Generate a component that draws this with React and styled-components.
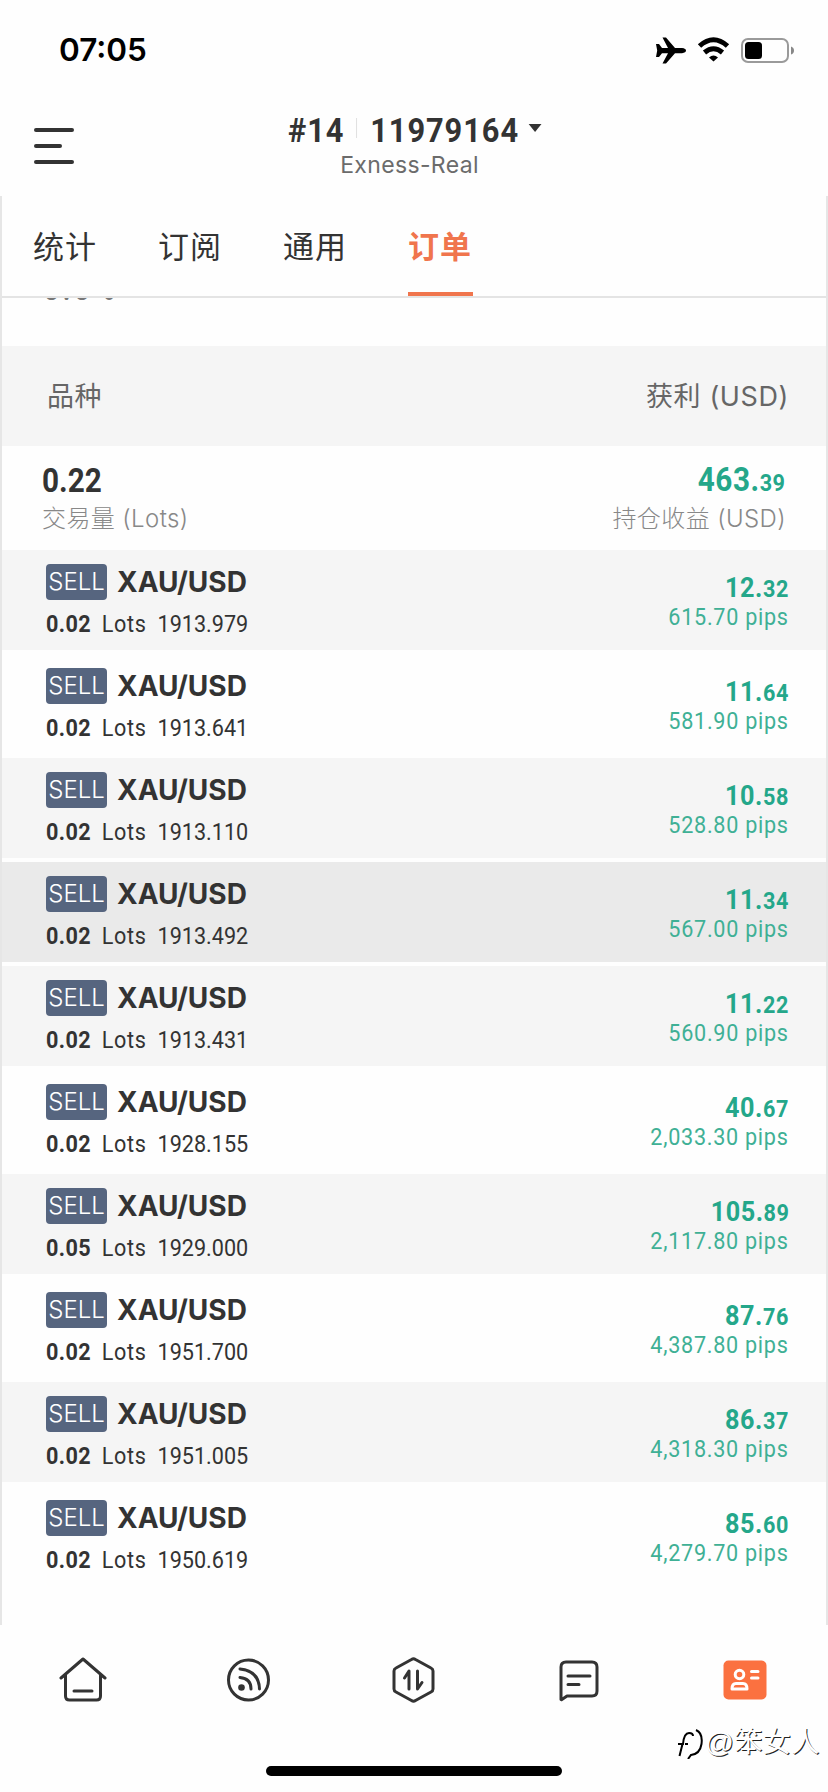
import React from "react";
import styled, { createGlobalStyle, css } from "styled-components";

const GlobalStyle = createGlobalStyle`
    * {
        box-sizing: border-box;
    }

    body {
        margin: 0;
        background-color: #fefefe;
        color: #333333;
        font-family: Inter, "Noto Sans CJK SC", sans-serif;
    }
`;

// condensed look for the figures
const din = css`
    font-family: Roboto, "Noto Sans CJK SC", sans-serif;
    transform: scaleX(0.9);
    transform-origin: left center;
`;

const Screen = styled.div`
    display: flex;
    flex-direction: column;
    width: 828px;
    height: 1792px;
    overflow: hidden;
`;

const StatusBar = styled.div`
    display: flex;
    justify-content: space-between;
    align-items: center;
    height: 100px;
    padding: 0 33px 0 59px;
    color: #000000;
`;

const Clock = styled.span`
    font-size: 31.5px;
    font-weight: 600;
    line-height: 40px;
`;

const StatusIcons = styled.svg`
    width: 140px;
    height: 30px;
`;

const Header = styled.header`
    display: grid;
    grid-template-columns: 200px 1fr 200px;
    height: 96px;
`;

const MenuButton = styled.button`
    display: flex;
    flex-direction: column;
    gap: 12px;
    border: none;
    background: none;
    padding: 28px 0 0 34px;
`;

const MenuLine = styled.span`
    width: ${(props) => props.$width}px;
    height: 4px;
    border-radius: 2px;
    background-color: #333333;
`;

const Account = styled.div`
    display: flex;
    flex-direction: column;
    align-items: center;
`;

const AccountTitle = styled.div`
    ${din}
    display: flex;
    align-items: center;
    height: 40px;
    margin: 10px 0 0 3px;
    font-size: 33.5px;
    font-weight: 700;
    letter-spacing: 1px;
    transform: scaleX(0.92);
    transform-origin: center;
`;

const Divider = styled.span`
    width: 1px;
    height: 20px;
    margin: 0 14px 4px 13px;
    background-color: #dddddd;
`;

const Caret = styled.svg`
    width: 15px;
    height: 8px;
    margin: 0 0 4px 10px;
`;

const Broker = styled.div`
    padding-right: 9px;
    font-size: 23px;
    line-height: 30px;
    color: #6b6b6b;
    letter-spacing: 0.35px;
`;

const Content = styled.main`
    display: flex;
    flex-direction: column;
    height: 1429px;
    border-left: 2px solid #e6e6e6;
    border-right: 2px solid #e6e6e6;
`;

const Tabs = styled.nav`
    display: flex;
    gap: 60px;
    height: 102px;
    padding-left: 31px;
    border-bottom: 2px solid #e4e4e4;
`;

const Tab = styled.div`
    width: 65px;
    height: 100px;
    border-bottom: 4px solid ${(props) => (props.$active ? "#f0754d" : "transparent")};
    color: ${(props) => (props.$active ? "#f0754d" : "#333333")};
    font-size: 31px;
    font-weight: ${(props) => (props.$active ? 700 : 400)};
    letter-spacing: 1px;
    line-height: 102px;
    white-space: nowrap;
`;

const Clipped = styled.div`
    display: flex;
    align-items: flex-start;
    height: 48px;
    padding-left: 41px;
    overflow: hidden;
`;

const ClippedText = styled.span`
    ${din}
    margin-top: -28px;
    font-size: 33px;
    font-weight: 500;
    letter-spacing: 3px;
    line-height: 38px;
    color: #777777;
`;

const TableHead = styled.div`
    display: flex;
    justify-content: space-between;
    height: 100px;
    padding: 0 37px 0 45px;
    background-color: #f5f5f5;
    color: #666666;
    font-size: 27px;
    letter-spacing: 0.6px;
    line-height: 101px;
`;

const Summary = styled.div`
    display: flex;
    justify-content: space-between;
    height: 104px;
    padding: 14px 40px 0 40px;
`;

const SummaryCell = styled.div`
    display: flex;
    flex-direction: column;
    align-items: ${(props) => (props.$right ? "flex-end" : "flex-start")};
`;

const Volume = styled.div`
    ${din}
    height: 42px;
    font-size: 33px;
    font-weight: 700;
    line-height: 42px;
`;

const SummaryLabel = styled.div`
    font-size: 24px;
    font-weight: 300;
    letter-spacing: 0.4px;
    line-height: 33px;
    color: #888888;
`;

const Profit = styled.div`
    ${din}
    transform-origin: right center;
    height: ${(props) => (props.$large ? 42 : 32)}px;
    font-size: ${(props) => (props.$large ? 33 : 28)}px;
    font-weight: 700;
    line-height: ${(props) => (props.$large ? 39 : 34)}px;
    letter-spacing: 0.6px;
    color: #24a78a;
`;

const Cents = styled.span`
    font-size: 24px;
`;

const Row = styled.div`
    display: flex;
    justify-content: space-between;
    height: 100px;
    margin-bottom: 4px;
    padding: 14px 37px 0 44px;
    background-color: ${(props) => props.$background};
`;

const Position = styled.div`
    display: flex;
    flex-direction: column;
`;

const SymbolLine = styled.div`
    display: flex;
    align-items: center;
    gap: 10px;
    height: 36px;
`;

const SideBadge = styled.span`
    width: 61px;
    height: 36px;
    border-radius: 4px;
    background-color: #56657f;
    color: #ffffff;
    font-size: 24px;
    font-weight: 300;
    line-height: 36px;
    text-align: center;
`;

const SymbolName = styled.span`
    font-size: 28px;
    font-weight: 700;
    line-height: 36px;
`;

const LotsLine = styled.div`
    ${din}
    display: flex;
    gap: 12px;
    margin-top: 8px;
    font-size: 24px;
    line-height: 32px;
`;

const Lots = styled.span`
    font-weight: 700;
    letter-spacing: 0.4px;
`;

const LotsUnit = styled.span`
    letter-spacing: 0.8px;
`;

const Result = styled.div`
    display: flex;
    flex-direction: column;
    align-items: flex-end;
    padding-top: 7px;
`;

const Pips = styled.div`
    ${din}
    transform-origin: right center;
    font-size: 24px;
    line-height: 28px;
    letter-spacing: 0.8px;
    color: #3fb095;
`;

const BottomNav = styled.nav`
    display: grid;
    grid-template-columns: repeat(5, 1fr);
    justify-items: center;
    height: 141px;
    padding-top: 31px;
`;

const NavIcon = styled.svg`
    width: 48px;
    height: 48px;
    fill: none;
    stroke: #333333;
    stroke-width: 3;
    stroke-linecap: round;
    stroke-linejoin: round;
`;

const HomeIndicator = styled.div`
    width: 296px;
    height: 10px;
    margin: 0 auto;
    border-radius: 5px;
    background-color: #000000;
`;

const Watermark = styled.div`
    position: absolute;
    left: 675px;
    top: 1719px;
    display: flex;
    align-items: center;
    height: 40px;
    color: #ffffff;
    font-family: "Liberation Sans", "Noto Sans CJK SC", sans-serif;
    font-size: 28.5px;
    white-space: nowrap;
    text-shadow: 1px 1px 0 #222222;
`;

const WatermarkLogo = styled.svg`
    width: 30px;
    height: 40px;
    fill: none;
    stroke: #000000;
    stroke-width: 2;
`;

const tabs = ["统计", "订阅", "通用", "订单"];

const positions = [
    { lots: "0.02", price: "1913.979", profit: "12.32", pips: "615.70" },
    { lots: "0.02", price: "1913.641", profit: "11.64", pips: "581.90" },
    { lots: "0.02", price: "1913.110", profit: "10.58", pips: "528.80" },
    { lots: "0.02", price: "1913.492", profit: "11.34", pips: "567.00", pressed: true },
    { lots: "0.02", price: "1913.431", profit: "11.22", pips: "560.90" },
    { lots: "0.02", price: "1928.155", profit: "40.67", pips: "2,033.30" },
    { lots: "0.05", price: "1929.000", profit: "105.89", pips: "2,117.80" },
    { lots: "0.02", price: "1951.700", profit: "87.76", pips: "4,387.80" },
    { lots: "0.02", price: "1951.005", profit: "86.37", pips: "4,318.30" },
    { lots: "0.02", price: "1950.619", profit: "85.60", pips: "4,279.70" },
];

function Money({ value, large }) {
    const [whole, cents] = value.split(".");

    return (
        <Profit $large={large}>
            {whole}.<Cents>{cents}</Cents>
        </Profit>
    );
}

function PositionRow({ item, index }) {
    let background = index % 2 === 0 ? "#f5f5f5" : "transparent";
    if (item.pressed) background = "#eaeaea";

    return (
        <Row $background={background}>
            <Position>
                <SymbolLine>
                    <SideBadge>SELL</SideBadge>
                    <SymbolName>XAU/USD</SymbolName>
                </SymbolLine>
                <LotsLine>
                    <Lots>{item.lots}</Lots>
                    <LotsUnit>Lots</LotsUnit>
                    <span>{item.price}</span>
                </LotsLine>
            </Position>
            <Result>
                <Money value={item.profit} />
                <Pips>{item.pips} pips</Pips>
            </Result>
        </Row>
    );
}

function StatusGlyphs() {
    return (
        <StatusIcons viewBox="0 0 140 30">
            {/* airplane */}
            <path d="M1 9H4L7 13H13L7.500 2.500H11L20 13H27Q31 13.500 31 15.500Q31 17.500 27 18.200H20L11 28.500H7.500L13 18.200H7L4 22H1L2.200 15.500Z" />
            {/* wifi */}
            <g fill="none" stroke="#000" strokeWidth="5">
                <path d="M44.500 11Q58.500-1.500 72.500 11" />
                <path d="M49.500 17.500Q58.500 10 67.500 17.500" />
            </g>
            <path d="M58.500 26.500L54 22.500Q58.500 18.500 63 22.500Z" />
            {/* battery */}
            <rect x="87" y="4" width="46" height="23" rx="6" fill="none" stroke="#9a9a9a" strokeWidth="2" />
            <rect x="90" y="7" width="17" height="17" rx="3.500" />
            <path d="M136 11.500Q139 12.500 139 15.500Q139 18.500 136 19.500Z" fill="#888" />
        </StatusIcons>
    );
}

function App() {
    return (
        <Screen>
            <GlobalStyle />
            <StatusBar>
                <Clock>07:05</Clock>
                <StatusGlyphs />
            </StatusBar>

            <Header>
                <MenuButton>
                    <MenuLine $width={40} />
                    <MenuLine $width={28} />
                    <MenuLine $width={40} />
                </MenuButton>
                <Account>
                    <AccountTitle>
                        <span>#14</span>
                        <Divider />
                        <span>11979164</span>
                        <Caret viewBox="0 0 14 8">
                            <path d="M0 0H14L7 8Z" fill="#333" />
                        </Caret>
                    </AccountTitle>
                    <Broker>Exness-Real</Broker>
                </Account>
            </Header>

            <Content>
                <Tabs>
                    {tabs.map((tab) => (
                        <Tab key={tab} $active={tab === "订单"}>
                            {tab}
                        </Tab>
                    ))}
                </Tabs>
                <Clipped>
                    <ClippedText>0.0%</ClippedText>
                </Clipped>
                <TableHead>
                    <span>品种</span>
                    <span>获利 (USD)</span>
                </TableHead>
                <Summary>
                    <SummaryCell>
                        <Volume>0.22</Volume>
                        <SummaryLabel>交易量 (Lots)</SummaryLabel>
                    </SummaryCell>
                    <SummaryCell $right>
                        <Money value="463.39" large />
                        <SummaryLabel>持仓收益 (USD)</SummaryLabel>
                    </SummaryCell>
                </Summary>
                {positions.map((item, index) => (
                    <PositionRow key={item.price} item={item} index={index} />
                ))}
            </Content>

            <BottomNav>
                <NavIcon viewBox="0 0 48 48">
                    <path d="M2 22L24 3L46 22M6.500 19V40Q6.500 44 10.500 44H37.500Q41.500 44 41.500 40V19M15 35H33" />
                </NavIcon>
                <NavIcon viewBox="0 0 48 48">
                    <circle cx="24.500" cy="24" r="20" />
                    <path d="M16 13Q35 15 35.500 33M16 21.500Q27 22.500 27 33" />
                    <circle cx="17.500" cy="31.500" r="3.300" fill="#333" stroke="none" />
                </NavIcon>
                <NavIcon viewBox="0 0 48 48">
                    <path d="M21.500 3.500Q23.500 2.200 25.500 3.500L41 12Q43 13 43 15V33Q43 35 41 36L25.500 44.500Q23.500 46 21.500 44.500L6 36Q4 35 4 33V15Q4 13 6 12Z" />
                    <path d="M14.500 22L19 15V33M27.500 15V33L32 26.500" />
                </NavIcon>
                <NavIcon viewBox="0 0 48 48">
                    <path d="M5 43.500V11Q5 6 10 6H36Q41 6 41 11V35Q41 40 36 40H11L5.500 43.800ZM12 20H34M12 28.500H23" />
                </NavIcon>
                <NavIcon viewBox="0 0 48 48">
                    <rect x="2.500" y="4.500" width="43" height="39" rx="5" fill="#fb7140" stroke="none" />
                    <g stroke="#fff">
                        <circle cx="18.500" cy="18.500" r="4.300" />
                        <path d="M11 33Q11 27.500 15 27.500H22Q26 27.500 26 33Z" />
                        <path d="M30.500 15.500H37M30.500 22H37" />
                    </g>
                </NavIcon>
            </BottomNav>
            <HomeIndicator />

            <Watermark>
                <WatermarkLogo viewBox="0 0 30 40">
                    <path d="M4.500 37L7.500 25M3 25H8Q9 14 14 14Q18 14 18 17M10 25H13" />
                    <path d="M21 11Q28 14 26.500 25Q25 35 16 36L13 40" />
                </WatermarkLogo>
                @笨女人
            </Watermark>
        </Screen>
    );
}

export default App;
